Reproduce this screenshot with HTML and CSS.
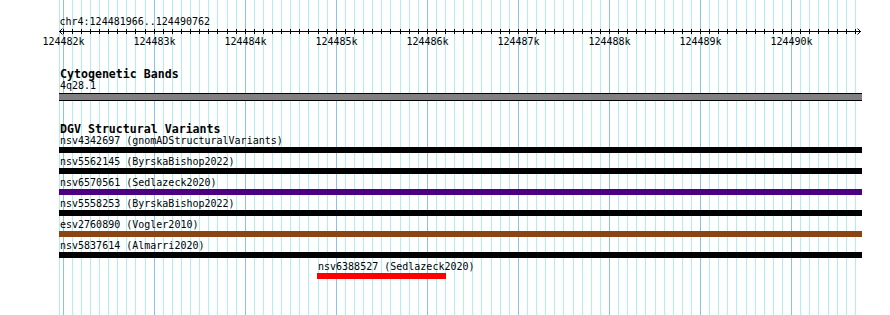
FILE: index.html
```html
<!DOCTYPE html>
<html lang="en">
<head>
  <meta charset="UTF-8" />
  <title>chr4:124481966..124490762</title>
  <link rel="stylesheet" href="styles.css">
</head>
<body>

<div class="browser">
  <!-- guide lines, drawn by the script below -->
  <svg class="grid" id="grid" width="890" height="315"></svg>

  <!-- ruler -->
  <svg class="ruler" id="ruler" width="890" height="68">
    <text class="locus" x="59.5" y="25">chr4:124481966..124490762</text>
    <line class="axis" x1="59" y1="31.5" x2="861" y2="31.5" />
    <polyline class="arrow" points="62.5,28.5 59.5,31.5 62.5,34.5" />
    <polyline class="arrow" points="857.5,28.5 860.5,31.5 857.5,34.5" />
  </svg>

  <div class="track">
    <div class="track-title">Cytogenetic Bands</div>
    <div class="feature" data-start="124100000" data-end="124900000">
      <div class="label">4q28.1</div>
      <div class="band"></div>
    </div>
  </div>

  <div class="track dgv">
    <div class="track-title">DGV Structural Variants</div>
    <div class="feature" data-start="124400000" data-end="124600000">
      <div class="label">nsv4342697 (gnomADStructuralVariants)</div>
      <div class="bar"></div>
    </div>
    <div class="feature" data-start="124400000" data-end="124600000">
      <div class="label">nsv5562145 (ByrskaBishop2022)</div>
      <div class="bar"></div>
    </div>
    <div class="feature" data-start="124400000" data-end="124600000">
      <div class="label">nsv6570561 (Sedlazeck2020)</div>
      <div class="bar purple"></div>
    </div>
    <div class="feature" data-start="124400000" data-end="124600000">
      <div class="label">nsv5558253 (ByrskaBishop2022)</div>
      <div class="bar"></div>
    </div>
    <div class="feature" data-start="124400000" data-end="124600000">
      <div class="label">esv2760890 (Vogler2010)</div>
      <div class="bar brown"></div>
    </div>
    <div class="feature" data-start="124400000" data-end="124600000">
      <div class="label">nsv5837614 (Almarri2020)</div>
      <div class="bar"></div>
    </div>
    <div class="feature" data-start="124484789" data-end="124486205">
      <div class="label">nsv6388527 (Sedlazeck2020)</div>
      <div class="bar red"></div>
    </div>
  </div>
</div>

<script>
  // view window
  const view = { start: 124481966, end: 124490762, left: 60, width: 801 };
  const scale = view.width / (view.end - view.start);
  const trackLeft = 59;
  const trackRight = 862;
  const svgNS = 'http://www.w3.org/2000/svg';

  function toX(bp) {
    return Math.floor(view.left + (bp - view.start) * scale);
  }

  function addLine(parent, x1, y1, x2, y2, cls) {
    const l = document.createElementNS(svgNS, 'line');
    l.setAttribute('x1', x1);
    l.setAttribute('y1', y1);
    l.setAttribute('x2', x2);
    l.setAttribute('y2', y2);
    l.setAttribute('class', cls);
    parent.appendChild(l);
  }

  const grid = document.getElementById('grid');
  const ruler = document.getElementById('ruler');

  // left edge of the track area
  addLine(grid, trackLeft + 0.5, 0, trackLeft + 0.5, 315, 'minor');

  // every 100 bp a guide line and a tick, every 1 kb a label
  for (let bp = Math.ceil(view.start / 100) * 100; bp <= view.end; bp += 100) {
    const x = toX(bp) + 0.5;
    const major = bp % 1000 === 0;
    addLine(grid, x, 0, x, 315, major ? 'major' : 'minor');
    addLine(ruler, x, 29, x, 34, 'tick');
    if (major) {
      const t = document.createElementNS(svgNS, 'text');
      t.setAttribute('x', x);
      t.setAttribute('y', 45);
      t.setAttribute('class', 'kb');
      t.textContent = (bp / 1000) + 'k';
      ruler.appendChild(t);
    }
  }

  // place features by their coordinates
  document.querySelectorAll('.feature').forEach(f => {
    const left = Math.max(trackLeft, toX(+f.dataset.start));
    const right = Math.min(trackRight, toX(+f.dataset.end));
    f.style.marginLeft = (left - trackLeft) + 'px';
    f.querySelector('.bar, .band').style.width = (right - left) + 'px';
  });
</script>

</body>
</html>
```

FILE: styles.css
```css
body {
  margin: 0;
  background-color: #ffffff;
  font-family: "DejaVu Sans Mono", monospace;
  color: #000;
}

.browser {
  position: relative;
  z-index: 0;
  width: 890px;
  height: 315px;
  overflow: hidden;
}

/* guide lines behind everything */
.grid {
  position: absolute;
  top: 0;
  left: 0;
  z-index: -1;
}
.grid .minor {
  stroke: #b0eef2;
  stroke-width: 1;
}
.grid .major {
  stroke: #88c4e6;
  stroke-width: 1;
}

/* ruler */
.ruler {
  display: block;
}
.ruler text {
  font-family: "DejaVu Sans Mono", monospace;
  font-size: 10px;
  fill: #000;
}
.ruler .kb {
  text-anchor: middle;
}
.ruler .axis,
.ruler .tick {
  stroke: #000;
  stroke-width: 1;
}
.ruler .arrow {
  fill: none;
  stroke: #000;
  stroke-width: 1;
}

/* tracks */
.track {
  padding-left: 59px;
}
.track.dgv {
  margin-top: 22px; /* collapses with the last feature's margin */
}
.track-title {
  font-weight: bold;
  font-size: 11.6px;
  line-height: 12px;
  padding-left: 1px;
}

.feature {
  margin-bottom: 3px;
}
.label {
  font-size: 10px;
  line-height: 12px;
  padding-left: 1px;
  white-space: nowrap;
}

.bar {
  height: 6px;
  background-color: #000;
}
.bar.purple {
  background-color: #4b0082;
}
.bar.brown {
  background-color: #8b4513;
}
.bar.red {
  background-color: #ff0000;
}

/* cytoband: grey with black edges */
.band {
  margin-top: 1px;
  height: 6px;
  background-color: #808080;
  border-top: 1px solid #000;
  border-bottom: 1px solid #000;
}
```
